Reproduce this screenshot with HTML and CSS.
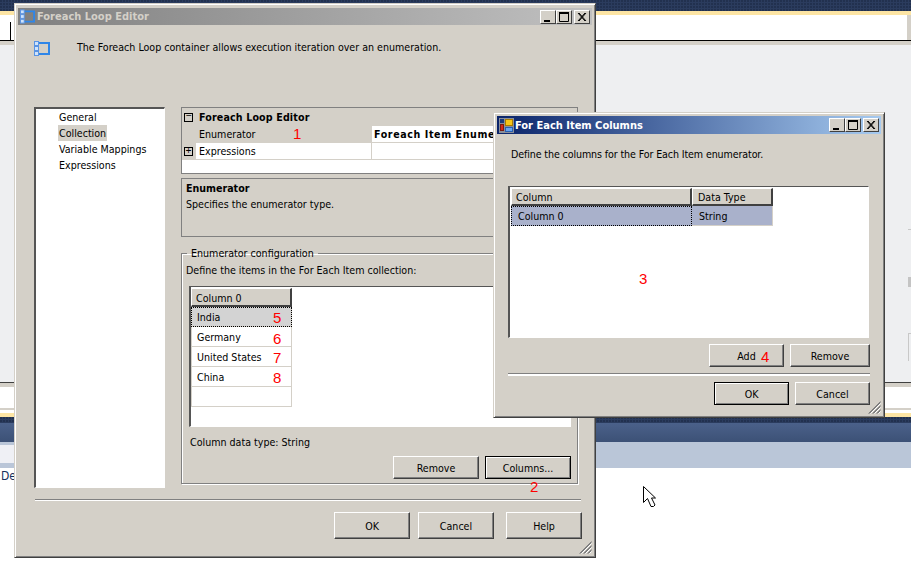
FILE: index.html
```html
<!DOCTYPE html>
<html lang="en">
<head>
<meta charset="utf-8">
<title>Foreach Loop Editor</title>
<link rel="stylesheet" href="styles.css">
</head>
<body>
<svg class="defs" width="0" height="0" aria-hidden="true">
  <symbol id="loop" viewBox="0 0 16 15">
    <path d="M4 2H15V13H4" fill="none" stroke="#2f86e8" stroke-width="2"/>
    <g fill="#cfe3fb" stroke="#5a94e4" stroke-width="1">
      <rect x="0.5" y="0.5" width="4" height="4"/>
      <rect x="0.5" y="5.5" width="4" height="4"/>
      <rect x="0.5" y="10.5" width="4" height="4"/>
    </g>
  </symbol>
  <symbol id="grip" viewBox="0 0 13 13">
    <g stroke-width="1">
      <path d="M12.5 0.5 0.5 12.5M12.5 4.5 4.5 12.5M12.5 8.5 8.5 12.5" stroke="#808080"/>
      <path d="M12.5 1.5 1.5 12.5M12.5 5.5 5.5 12.5M12.5 9.5 9.5 12.5" stroke="#808080"/>
      <path d="M12.5 2.5 2.5 12.5M12.5 6.5 6.5 12.5M12.5 10.5 10.5 12.5" stroke="#fff"/>
    </g>
  </symbol>
  <symbol id="min" viewBox="0 0 14 12"><rect x="3" y="9" width="6" height="2" fill="#000"/></symbol>
  <symbol id="max" viewBox="0 0 14 12"><path d="M2.500 1.500H11.500V10.500H2.500z" fill="none" stroke="#000"/><rect x="2" y="1" width="10" height="2" fill="#000"/></symbol>
  <symbol id="close" viewBox="0 0 14 12"><path d="M3 2 10 10M4 2 11 10M10 2 3 10M11 2 4 10" stroke="#000" fill="none"/></symbol>
</svg>

<main class="desktop">
  <div class="bg-top"><span class="bg-tick"></span></div>
  <div class="bg-yellow"></div>
  <div class="bg-field"><span class="bg-vline"></span></div>
  <div class="bg-rule"></div>
  <div class="bg-grey"></div>
  <div class="bg-work">
    <div class="bg-ghost">
      <span class="ghost-line"></span>
      <span class="ghost-block"></span>
      <span class="ghost-frame"></span>
    </div>
  </div>
  <div class="bg-dark"></div>
  <div class="bg-white"><span class="bg-line"></span></div>
  <div class="bg-yellow bg-yellow-low"></div>
  <div class="bg-dots"></div>
  <div class="bg-gradient"></div>
  <div class="bg-strip"><span class="bg-strip-left"></span></div>
  <div class="bg-bottom"><span class="bg-de">De</span></div>

  <section class="win win-editor">
    <header class="title title-off">
      <svg class="title-icon"><use href="#loop"/></svg>
      <span class="title-text">Foreach Loop Editor</span>
      <span class="ctrls">
        <span class="ctrl"><svg><use href="#min"/></svg></span>
        <span class="ctrl"><svg><use href="#max"/></svg></span>
        <span class="ctrl ctrl-close"><svg><use href="#close"/></svg></span>
      </span>
    </header>
    <div class="intro">
      <svg class="intro-icon"><use href="#loop"/></svg>
      <p class="intro-text">The Foreach Loop container allows execution iteration over an enumeration.</p>
    </div>
    <div class="main">
      <nav class="nav">
        <div class="nav-item">General</div>
        <div class="nav-item"><span class="nav-sel">Collection</span></div>
        <div class="nav-item">Variable Mappings</div>
        <div class="nav-item">Expressions</div>
      </nav>
      <div class="side">
        <div class="props">
          <div class="prow prow-head">
            <span class="gutter"><span class="tree">−</span></span>
            <span class="pname">Foreach Loop Editor</span>
          </div>
          <div class="prow">
            <span class="gutter"></span>
            <span class="pname">Enumerator</span>
            <span class="pval pval-bold">Foreach Item Enumerator</span>
          </div>
          <div class="prow">
            <span class="gutter"><span class="tree">+</span></span>
            <span class="pname pname-white">Expressions</span>
            <span class="pval"></span>
          </div>
        </div>
        <div class="desc">
          <div class="desc-head">Enumerator</div>
          <div class="desc-text">Specifies the enumerator type.</div>
        </div>
        <fieldset class="group">
          <legend class="legend">Enumerator configuration</legend>
          <p class="group-hint">Define the items in the For Each Item collection:</p>
          <div class="listbox">
            <div class="thead thead-one"><span class="th th-one">Column 0</span></div>
            <div class="td td-one td-sel">India</div>
            <div class="td td-one">Germany</div>
            <div class="td td-one">United States</div>
            <div class="td td-one">China</div>
            <div class="td td-one"></div>
          </div>
          <p class="group-type">Column data type: String</p>
          <div class="group-btns">
            <button class="btn btn-m">Remove</button>
            <button class="btn btn-m btn-def">Columns...</button>
          </div>
        </fieldset>
      </div>
    </div>
    <hr class="sep sep-editor">
    <footer class="foot-editor">
      <button class="btn btn-l">OK</button>
      <button class="btn btn-l">Cancel</button>
      <button class="btn btn-l btn-help">Help</button>
    </footer>
    <svg class="grip"><use href="#grip"/></svg>
  </section>

  <section class="win win-cols">
    <header class="title title-on">
      <svg class="title-icon" viewBox="0 0 15 15">
        <rect width="15" height="15" fill="#8a8f9a"/>
        <rect x="6.500" y="1.500" width="7" height="6" fill="#f5c518" stroke="#a87a00"/>
        <rect x="1.500" y="6.500" width="3" height="6" fill="#d42a1a" stroke="#7a1a10"/>
        <rect x="6.500" y="9.500" width="7" height="4" fill="#6aa5ee" stroke="#2a5fb0"/>
        <rect x="1" y="1" width="4" height="4" fill="#1c3c7c"/>
      </svg>
      <span class="title-text">For Each Item Columns</span>
      <span class="ctrls">
        <span class="ctrl"><svg><use href="#min"/></svg></span>
        <span class="ctrl"><svg><use href="#max"/></svg></span>
        <span class="ctrl ctrl-close"><svg><use href="#close"/></svg></span>
      </span>
    </header>
    <p class="cols-intro">Define the columns for the For Each Item enumerator.</p>
    <div class="cols-list">
      <div class="thead thead-cols">
        <span class="th th-col">Column</span>
        <span class="th th-type">Data Type</span>
      </div>
      <div class="cols-row">
        <span class="cell cell-col">Column 0</span>
        <span class="cell cell-type">String</span>
      </div>
    </div>
    <div class="cols-actions">
      <button class="btn btn-add">Add</button>
      <button class="btn btn-rem">Remove</button>
    </div>
    <hr class="sep sep-cols">
    <footer class="cols-foot">
      <button class="btn btn-m2 btn-def">OK</button>
      <button class="btn btn-m2">Cancel</button>
    </footer>
    <svg class="grip"><use href="#grip"/></svg>
  </section>

  <span class="mark mark-1">1</span>
  <span class="mark mark-2">2</span>
  <span class="mark mark-3">3</span>
  <span class="mark mark-4">4</span>
  <span class="mark mark-5">5</span>
  <span class="mark mark-6">6</span>
  <span class="mark mark-7">7</span>
  <span class="mark mark-8">8</span>

  <svg class="cursor" viewBox="0 0 13 21"><path d="M0.500 0.500V16.500L4.500 12.500L8 20.500H10.500L12 19L8.500 12H12.500z" fill="#fff" stroke="#000"/></svg>
</main>
</body>
</html>
```
FILE: styles.css
```css
* { box-sizing: border-box; }
html, body { margin: 0; padding: 0; background: #fff; }
body { width: 911px; height: 575px; overflow: hidden; }
.defs { position: absolute; }
p { margin: 0; }

.desktop {
  position: relative;
  width: 911px;
  height: 575px;
  overflow: hidden;
  font: 10.6px/16px "DejaVu Sans Condensed", "DejaVu Sans", "Liberation Sans", sans-serif;
  font-stretch: condensed;
  color: #000;
}

/* background application */
.bg-top {
  height: 11px;
  background-color: #2b3c5e;
  background-image: radial-gradient(circle at 1px 1px, #22314f 1px, transparent 1px);
  background-size: 3px 3px;
}
.bg-yellow { height: 4px; background: #fde5a4; }
.bg-field { position: relative; height: 25px; background: #fff; border-right: 4px solid #d4d0c8; }
.bg-vline { position: absolute; left: 10px; top: 7px; width: 1px; height: 18px; background: #000; }
.bg-rule { height: 1px; background: #000; }
.bg-grey { height: 4px; background: #d4d0c8; }
.bg-work { position: relative; height: 337px; background: #eeeff1; }
.bg-ghost { position: absolute; right: 0; top: 184px; width: 3px; }
.ghost-line { display: block; height: 1px; background: #c8c8c8; }
.ghost-block { display: block; height: 10px; margin-top: 47px; background: #c4c4c4; }
.ghost-frame { display: block; height: 28px; margin-top: 46px; border-top: 1px solid #c8c8c8; border-left: 1px solid #c8c8c8; }
.bg-dark { height: 5px; background: #d4d0c8; border-top: 1px solid #404040; }
.bg-white { position: relative; height: 26px; background: #fff; }
.bg-line { position: absolute; left: 0; right: 0; top: 21px; height: 2px; background: #d4d0c8; }
.bg-yellow-low { height: 4px; }
.bg-dots {
  height: 6px;
  background-color: #2b3c5e;
  background-image: radial-gradient(circle at 1px 1px, #22314f 1px, transparent 1px);
  background-size: 3px 3px;
}
.bg-gradient { height: 19px; background: linear-gradient(#4b618a, #3c5176); }
.bg-strip { position: relative; height: 26px; background: #bac6d8; }
.bg-strip-left { position: absolute; left: 0; top: 3px; width: 14px; height: 18px; background: #eff0f5; }
.bg-bottom { position: relative; height: 107px; background: #fff; }
.bg-de { position: absolute; left: 1px; top: 0; font-size: 12px; color: #14305c; }

/* windows */
.win {
  position: absolute;
  display: flex;
  flex-direction: column;
  padding: 4px 3px;
  background: #d4d0c8;
  border: 1px solid;
  border-color: #d4d0c8 #404040 #404040 #d4d0c8;
  box-shadow: inset 1px 1px #fff, inset -1px -1px #808080;
}
.win-editor { left: 14px; top: 3px; width: 582px; height: 555px; }
.win-cols { left: 493px; top: 112px; width: 392px; height: 306px; padding-top: 3px; }

.title { display: flex; align-items: center; flex: none; padding-left: 2px; font-weight: 700; }
.title-off { height: 17px; background: linear-gradient(90deg, #808080, #c0c0c0); color: #d4d0c8; }
.title-on { height: 18px; background: linear-gradient(90deg, #0a246a, #a6caf0); color: #fff; }
.title-icon { width: 15px; height: 15px; flex: none; }
.title-text { margin-left: 2px; font-size: 11px; white-space: nowrap; }
.title-on .title-text { margin-left: 1px; padding-top: 1px; }
.ctrls { display: flex; margin-left: auto; margin-right: 2px; }
.ctrl {
  width: 16px;
  height: 14px;
  background: #d4d0c8;
  border: 1px solid;
  border-color: #fff #404040 #404040 #fff;
  display: flex;
}
.ctrl svg { width: 14px; height: 12px; }
.ctrl-close { margin-left: 2px; }

.intro { display: flex; flex: none; height: 82px; padding: 16px 0 0 16px; }
.intro-icon { width: 16px; height: 15px; flex: none; }
.intro-text { margin-left: 27px; white-space: nowrap; line-height: 12px; }

.main { display: flex; flex: none; padding-left: 16px; gap: 16px; }
.nav {
  width: 131px;
  height: 381px;
  flex: none;
  padding: 0 0 0 23px;
  background: #fff;
  border: 1px solid #fff;
  border-left-width: 2px;
  border-top-width: 2px;
  border-top-color: #555;
  border-left-color: #555;
}
.nav-item { height: 16px; white-space: nowrap; }
.nav-sel { display: inline-block; height: 16px; margin-left: -1px; padding: 0 1px; background: #d4d0c8; }

.side { display: flex; flex-direction: column; width: 397px; flex: none; }
.props { height: 67px; flex: none; background: #fff; border: 1px solid #808080; }
.prow { display: flex; height: 17px; white-space: nowrap; background: #d4d0c8; overflow: hidden; }
.prow-head { height: 18px; font-weight: 700; line-height: 18px; letter-spacing: 0.15px; }
.gutter { width: 14px; flex: none; display: flex; align-items: center; padding-left: 2px; }
.tree {
  width: 9px;
  height: 9px;
  border: 1px solid #000;
  display: flex;
  align-items: center;
  justify-content: center;
  font: 10px/1 "Liberation Mono", monospace;
}
.pname { width: 176px; flex: none; padding-left: 3px; }
.prow-head .pname { width: auto; }
.pname-white { background: #fff; border-right: 1px solid #d4d0c8; border-bottom: 1px solid #d4d0c8; }
.pval { flex: 1; padding-left: 2px; background: #fff; border-bottom: 1px solid #d4d0c8; }
.pval-bold { font-weight: 700; letter-spacing: 0.6px; }

.desc { height: 59px; flex: none; margin-top: 4px; padding: 1px 4px; border: 1px solid #808080; }
.desc-head { font-weight: 700; }

.group {
  height: 237px;
  flex: none;
  margin: 10px 0 0;
  padding: 0 4px;
  border: 1px solid #808080;
  box-shadow: 1px 1px #fff, inset 1px 1px #fff;
  min-width: 0;
}
.legend { margin-left: 1px; padding: 0 4px; line-height: 12px; white-space: nowrap; }
.group-hint { margin-top: 4px; white-space: nowrap; line-height: 14px; }
.listbox {
  height: 141px;
  width: 382px;
  margin: 9px 0 0 3px;
  padding: 1px 1px 1px 0;
  background: #fff;
  border: 1px solid;
  border-color: #555 #fff #fff #555;
  border-left-width: 2px;
}
.thead { display: flex; height: 19px; }
.thead-one { width: 101px; }
.thead-cols { height: 18px; }
.th {
  display: block;
  height: 19px;
  background: #d4d0c8;
  border: 1px solid;
  border-color: #fff #404040 #404040 #fff;
  border-bottom-width: 2px;
  border-right-width: 2px;
  padding-left: 4px;
  line-height: 18px;
  white-space: nowrap;
}
.th-one { width: 101px; }
.td {
  height: 20px;
  padding-left: 5px;
  line-height: 20px;
  border-right: 1px solid #d4d0c8;
  border-bottom: 1px solid #d4d0c8;
  border-left: 1px solid #d4d0c8;
  white-space: nowrap;
}
.td-one { width: 101px; }
.td-sel { background: #d3d3d3; outline: 1px dotted #000; outline-offset: -1px; }
.group-type { margin-top: 7px; margin-left: 4px; line-height: 16px; white-space: nowrap; }
.group-btns { display: flex; justify-content: flex-end; gap: 6px; margin-top: 6px; margin-right: 2px; }

/* buttons */
.btn {
  display: block;
  padding: 0;
  background: #d4d0c8;
  border: 1px solid;
  border-color: #fff #404040 #404040 #fff;
  box-shadow: inset -1px -1px #808080;
  font: inherit;
  color: #000;
}
.btn-def { border-color: #000; box-shadow: inset 1px 1px #fff, inset -1px -1px #808080; }
.btn-m { width: 86px; height: 23px; }
.btn-l { width: 76px; height: 27px; }
.btn-help { margin-left: 4px; }
.btn-add { width: 75px; height: 23px; }
.btn-rem { width: 80px; height: 23px; }
.btn-m2 { width: 75px; height: 23px; }

.sep { display: block; height: 2px; margin: 0; border: 0; border-top: 1px solid #808080; border-bottom: 1px solid #fff; flex: none; }
.sep-editor { margin: 11px 11px 0 17px; }
.foot-editor { display: flex; justify-content: flex-end; gap: 8px; margin-top: 11px; padding-right: 10px; flex: none; }

.grip { position: absolute; width: 13px; height: 13px; right: 3px; bottom: 3px; }

.cols-intro { margin: 12px 0 0 14px; line-height: 16px; white-space: nowrap; flex: none; letter-spacing: -0.11px; }
.cols-list {
  width: 361px;
  height: 152px;
  margin: 24px 0 0 11px;
  padding: 1px;
  flex: none;
  background: #fff;
  border: 1px solid;
  border-color: #555 #fff #fff #555;
  border-left-width: 2px;
}
.th-col { width: 181px; height: 18px; line-height: 17px; }
.th-type { width: 81px; height: 18px; line-height: 17px; padding-left: 5px; }
.cols-row { display: flex; height: 20px; background: #a9b1cb; width: 262px; line-height: 20px; }
.cell { display: block; white-space: nowrap; }
.cell-col { width: 181px; padding-left: 7px; outline: 1px dotted #000; outline-offset: -1px; }
.cell-type { width: 81px; padding-left: 7px; border-right: 1px solid #d4d0c8; border-bottom: 1px solid #d4d0c8; }

.cols-actions { display: flex; justify-content: flex-end; gap: 6px; margin-top: 6px; padding-right: 11px; flex: none; }
.sep-cols { margin: 6px 11px 0 11px; height: 3px; border-bottom-width: 2px; }
.cols-foot { display: flex; justify-content: flex-end; gap: 6px; margin-top: 6px; padding-right: 11px; flex: none; }

/* annotations */
.mark { position: absolute; color: #f00; font: 15px/16px "Liberation Sans", sans-serif; }
.mark-1 { left: 293px; top: 126px; }
.mark-2 { left: 530px; top: 479px; }
.mark-3 { left: 639px; top: 271px; }
.mark-4 { left: 761px; top: 349px; }
.mark-5 { left: 273px; top: 310px; }
.mark-6 { left: 273px; top: 331px; }
.mark-7 { left: 273px; top: 350px; }
.mark-8 { left: 273px; top: 370px; }

.cursor { position: absolute; left: 643px; top: 486px; width: 13px; height: 21px; }
```
